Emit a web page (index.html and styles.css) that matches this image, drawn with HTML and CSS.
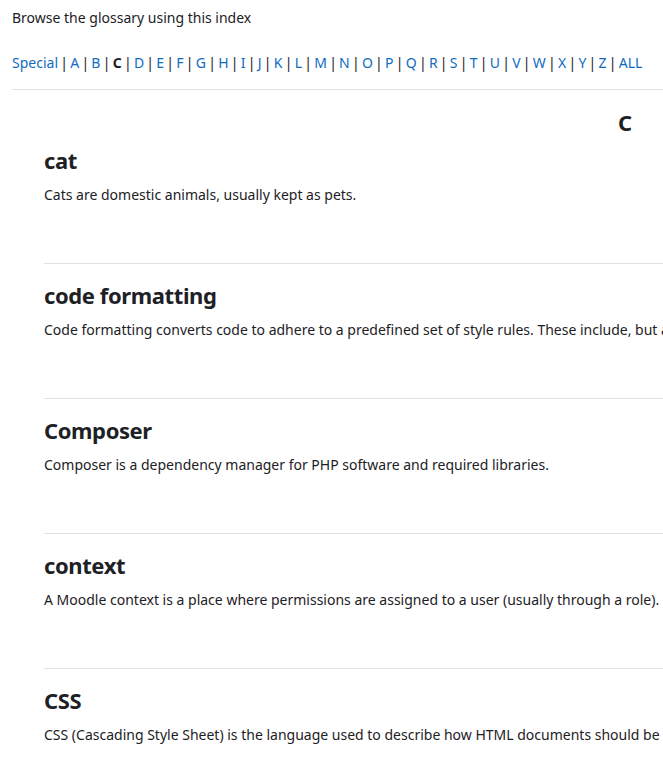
FILE: index.html
```html
<!DOCTYPE html>
<html>
<head>
<meta charset="utf-8">
<link rel="stylesheet" href="styles.css">
</head>
<body>
<div class="page">
  <p class="intro">Browse the glossary using this index</p>
  <div class="index">
    <a href="#">Special</a> | <a href="#">A</a> | <a href="#">B</a> | <b class="current">C</b> | <a href="#">D</a> | <a href="#">E</a> | <a href="#">F</a> | <a href="#">G</a> | <a href="#">H</a> | <a href="#">I</a> | <a href="#">J</a> | <a href="#">K</a> | <a href="#">L</a> | <a href="#">M</a> | <a href="#">N</a> | <a href="#">O</a> | <a href="#">P</a> | <a href="#">Q</a> | <a href="#">R</a> | <a href="#">S</a> | <a href="#">T</a> | <a href="#">U</a> | <a href="#">V</a> | <a href="#">W</a> | <a href="#">X</a> | <a href="#">Y</a> | <a href="#">Z</a> | <a href="#">ALL</a>
  </div>
  <hr class="rule">
  <div class="letter">C</div>
  <div class="entries">
    <div class="entry">
      <h3 class="term">cat</h3>
      <p class="def">Cats are domestic animals, usually kept as pets.</p>
    </div>
    <div class="entry">
      <h3 class="term">code formatting</h3>
      <p class="def">Code formatting converts code to adhere to a predefined set of style rules. These include, but are not limited to, indentation, spacing and line length.</p>
    </div>
    <div class="entry">
      <h3 class="term">Composer</h3>
      <p class="def">Composer is a dependency manager for PHP software and required libraries.</p>
    </div>
    <div class="entry">
      <h3 class="term">context</h3>
      <p class="def">A Moodle context is a place where permissions are assigned to a user (usually through a role).</p>
    </div>
    <div class="entry">
      <h3 class="term">CSS</h3>
      <p class="def">CSS (Cascading Style Sheet) is the language used to describe how HTML documents should be presented on screen.</p>
    </div>
  </div>
</div>
</body>
</html>
```
FILE: styles.css
```css
html, body {
  margin: 0;
  padding: 0;
  background: #fff;
}
body {
  font-family: "Noto Sans", "Open Sans", sans-serif;
  font-size: 14px;
  color: #1d2125;
  overflow: hidden;
}
.page {
  width: 1226px;
  padding: 0 12px;
}
.intro {
  margin: 0;
  padding-top: 8px;
  line-height: 20px;
}
.index {
  margin-top: 24px;
  line-height: 22px;
  white-space: nowrap;
  word-spacing: -1.4px;
}
.index a {
  color: #0f6cbf;
  text-decoration: none;
}
.current {
  font-weight: bold;
}
.rule {
  margin: 15px 0 0 0;
  border: 0;
  border-top: 1px solid #dee2e6;
}
.letter {
  text-align: center;
  font-weight: bold;
  font-size: 22px;
  line-height: 14px;
  margin-top: 25px;
}
.entries {
  padding-left: 32px;
}
.entry {
  height: 135px;
  border-bottom: 1px solid #dee2e6;
  padding-top: 17px;
  box-sizing: border-box;
}
.term {
  margin: 0;
  font-size: 22px;
  font-weight: bold;
  line-height: 28px;
  letter-spacing: -0.4px;
}
.def {
  margin: 11px 0 0 0;
  line-height: 20px;
  white-space: nowrap;
}
```
